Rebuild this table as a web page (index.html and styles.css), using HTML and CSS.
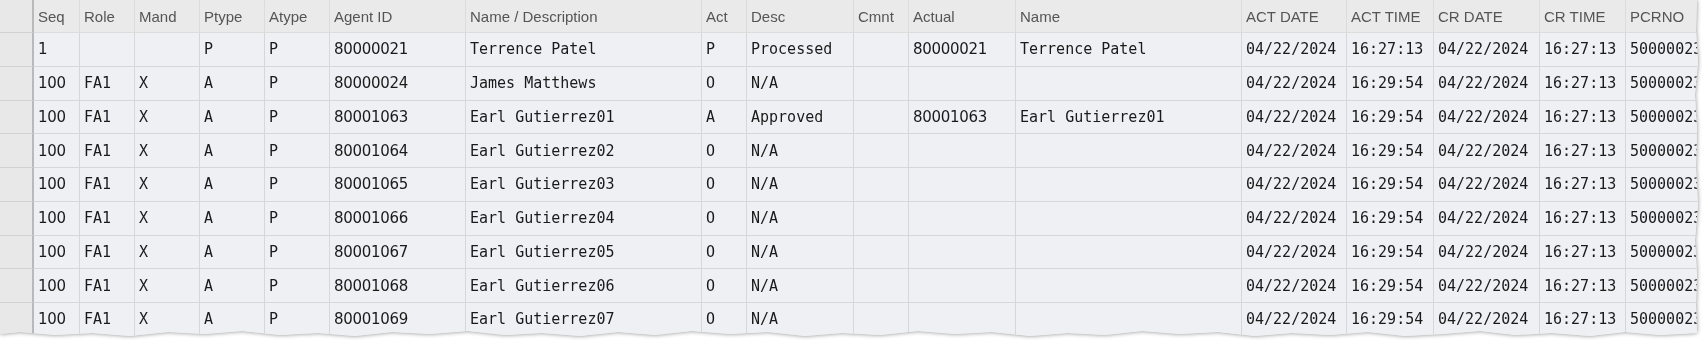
FILE: index.html
```html
<!DOCTYPE html>
<html>
<head>
<meta charset="utf-8">
<link rel="stylesheet" href="styles.css">
</head>
<body>
<div class="paper">
  <div class="sheet">
    <div class="grid">
      <div class="c rh hd"></div>
      <div class="c hd">Seq</div><div class="c hd">Role</div><div class="c hd">Mand</div><div class="c hd">Ptype</div><div class="c hd">Atype</div><div class="c hd">Agent ID</div><div class="c hd">Name / Description</div><div class="c hd">Act</div><div class="c hd">Desc</div><div class="c hd">Cmnt</div><div class="c hd">Actual</div><div class="c hd">Name</div><div class="c hd">ACT DATE</div><div class="c hd">ACT TIME</div><div class="c hd">CR DATE</div><div class="c hd">CR TIME</div><div class="c hd">PCRNO</div>

      <div class="c rh"></div>
      <div class="c sn">1</div><div class="c"></div><div class="c"></div><div class="c">P</div><div class="c">P</div><div class="c sn">80000021</div><div class="c">Terrence Patel</div><div class="c">P</div><div class="c">Processed</div><div class="c"></div><div class="c sn">80000021</div><div class="c">Terrence Patel</div><div class="c">04/22/2024</div><div class="c">16:27:13</div><div class="c">04/22/2024</div><div class="c">16:27:13</div><div class="c">50000023</div>

      <div class="c rh"></div>
      <div class="c sn">100</div><div class="c">FA1</div><div class="c">X</div><div class="c">A</div><div class="c">P</div><div class="c sn">80000024</div><div class="c">James Matthews</div><div class="c">O</div><div class="c">N/A</div><div class="c"></div><div class="c"></div><div class="c"></div><div class="c">04/22/2024</div><div class="c">16:29:54</div><div class="c">04/22/2024</div><div class="c">16:27:13</div><div class="c">50000023</div>

      <div class="c rh"></div>
      <div class="c sn">100</div><div class="c">FA1</div><div class="c">X</div><div class="c">A</div><div class="c">P</div><div class="c sn">80001063</div><div class="c">Earl Gutierrez01</div><div class="c">A</div><div class="c">Approved</div><div class="c"></div><div class="c sn">80001063</div><div class="c">Earl Gutierrez01</div><div class="c">04/22/2024</div><div class="c">16:29:54</div><div class="c">04/22/2024</div><div class="c">16:27:13</div><div class="c">50000023</div>

      <div class="c rh"></div>
      <div class="c sn">100</div><div class="c">FA1</div><div class="c">X</div><div class="c">A</div><div class="c">P</div><div class="c sn">80001064</div><div class="c">Earl Gutierrez02</div><div class="c">O</div><div class="c">N/A</div><div class="c"></div><div class="c"></div><div class="c"></div><div class="c">04/22/2024</div><div class="c">16:29:54</div><div class="c">04/22/2024</div><div class="c">16:27:13</div><div class="c">50000023</div>

      <div class="c rh"></div>
      <div class="c sn">100</div><div class="c">FA1</div><div class="c">X</div><div class="c">A</div><div class="c">P</div><div class="c sn">80001065</div><div class="c">Earl Gutierrez03</div><div class="c">O</div><div class="c">N/A</div><div class="c"></div><div class="c"></div><div class="c"></div><div class="c">04/22/2024</div><div class="c">16:29:54</div><div class="c">04/22/2024</div><div class="c">16:27:13</div><div class="c">50000023</div>

      <div class="c rh"></div>
      <div class="c sn">100</div><div class="c">FA1</div><div class="c">X</div><div class="c">A</div><div class="c">P</div><div class="c sn">80001066</div><div class="c">Earl Gutierrez04</div><div class="c">O</div><div class="c">N/A</div><div class="c"></div><div class="c"></div><div class="c"></div><div class="c">04/22/2024</div><div class="c">16:29:54</div><div class="c">04/22/2024</div><div class="c">16:27:13</div><div class="c">50000023</div>

      <div class="c rh"></div>
      <div class="c sn">100</div><div class="c">FA1</div><div class="c">X</div><div class="c">A</div><div class="c">P</div><div class="c sn">80001067</div><div class="c">Earl Gutierrez05</div><div class="c">O</div><div class="c">N/A</div><div class="c"></div><div class="c"></div><div class="c"></div><div class="c">04/22/2024</div><div class="c">16:29:54</div><div class="c">04/22/2024</div><div class="c">16:27:13</div><div class="c">50000023</div>

      <div class="c rh"></div>
      <div class="c sn">100</div><div class="c">FA1</div><div class="c">X</div><div class="c">A</div><div class="c">P</div><div class="c sn">80001068</div><div class="c">Earl Gutierrez06</div><div class="c">O</div><div class="c">N/A</div><div class="c"></div><div class="c"></div><div class="c"></div><div class="c">04/22/2024</div><div class="c">16:29:54</div><div class="c">04/22/2024</div><div class="c">16:27:13</div><div class="c">50000023</div>

      <div class="c rh"></div>
      <div class="c sn">100</div><div class="c">FA1</div><div class="c">X</div><div class="c">A</div><div class="c">P</div><div class="c sn">80001069</div><div class="c">Earl Gutierrez07</div><div class="c">O</div><div class="c">N/A</div><div class="c"></div><div class="c"></div><div class="c"></div><div class="c">04/22/2024</div><div class="c">16:29:54</div><div class="c">04/22/2024</div><div class="c">16:27:13</div><div class="c">50000023</div>
    </div>
  </div>
</div>
</body>
</html>
```
FILE: styles.css
```css
html, body {
  margin: 0;
  padding: 0;
  background: #ffffff;
}

.paper {
  width: 1702px;
  height: 340px;
  filter: drop-shadow(0 0 2px rgba(0, 0, 0, 0.45));
}

.sheet {
  width: 1698px;
  height: 338px;
  overflow: hidden;
  background: #eef0f3;
  clip-path: polygon(
    0 0, 1697px 0, 1696px 30px, 1698px 62px, 1695px 95px, 1697px 130px,
    1696px 168px, 1698px 205px, 1695px 240px, 1697px 275px, 1696px 305px, 1697px 333px,
    1660px 335px, 1625px 332px, 1590px 336px, 1552px 333px, 1515px 335px, 1480px 331px,
    1442px 334px, 1405px 336px, 1368px 332px, 1330px 335px, 1292px 333px, 1255px 336px,
    1218px 332px, 1180px 334px, 1142px 331px, 1105px 335px, 1068px 333px, 1030px 336px,
    992px 332px, 955px 334px, 918px 331px, 880px 335px, 842px 333px, 805px 336px,
    768px 332px, 730px 334px, 692px 331px, 655px 335px, 618px 332px, 580px 336px,
    542px 333px, 505px 335px, 468px 331px, 430px 334px, 392px 332px, 355px 336px,
    318px 333px, 280px 335px, 242px 331px, 205px 334px, 168px 332px, 130px 336px,
    92px 333px, 55px 335px, 20px 332px, 0 334px
  );
}

.grid {
  display: grid;
  grid-template-columns: 34px 46px 55px 65px 65px 65px 136px 236px 45px 107px 55px 107px 226px 105px 87px 106px 86px 100px;
  grid-template-rows: 33px repeat(9, 33.75px);
  width: 1726px;
}

.c {
  box-sizing: border-box;
  border-right: 1px solid #d4d7db;
  border-bottom: 1px solid #d4d7db;
  padding: 0 4px;
  display: flex;
  align-items: center;
  white-space: nowrap;
  overflow: hidden;
  background: #eef0f3;
  color: #1a1a1a;
  font-family: "DejaVu Sans Mono", "Liberation Mono", monospace;
  font-size: 15px;
}

.c.sn {
  font-family: "DejaVu Sans", "Liberation Sans", sans-serif;
  font-size: 15px;
  letter-spacing: -0.3px;
}

.c.hd {
  background: #eaeaea;
  color: #555555;
  font-family: "Liberation Sans", Arial, sans-serif;
  font-size: 15px;
  border-bottom-color: #dcdcdc;
  border-right-color: #dcdcdc;
}

.c.rh {
  background: #e8e8e8;
  border-right: 2px solid #b9b9b9;
  border-bottom-color: #d2d2d2;
}
```
